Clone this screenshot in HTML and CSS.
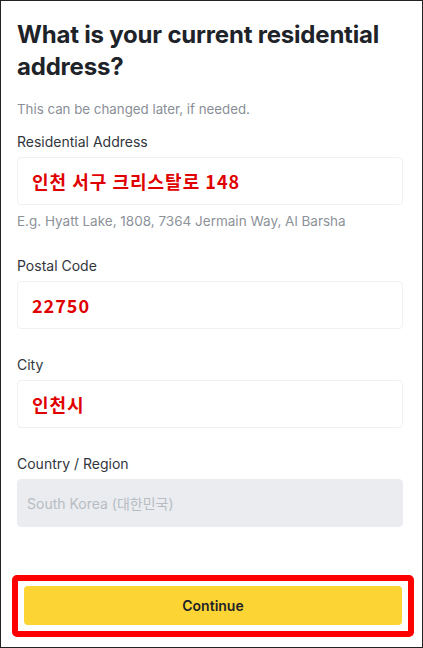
FILE: index.html
```html
<!DOCTYPE html>
<html lang="en">
<head>
    <meta charset="UTF-8">
    <meta name="viewport" content="width=device-width, initial-scale=1.0">
    <title>Residential Address</title>
    <link rel="stylesheet" href="styles.css">
</head>
<body>

    <div class="screen">
        <div class="form">
            <h1 class="title">What is your current residential address?</h1>
            <p class="subtitle">This can be changed later, if needed.</p>

            <div class="field">
                <label class="field-label">Residential Address</label>
                <div class="input">
                    <span class="value">인천 서구 크리스탈로 148</span>
                </div>
                <p class="hint">E.g. Hyatt Lake, 1808, 7364 Jermain Way, Al Barsha</p>
            </div>

            <div class="field">
                <label class="field-label">Postal Code</label>
                <div class="input">
                    <span class="value">22750</span>
                </div>
            </div>

            <div class="field">
                <label class="field-label">City</label>
                <div class="input">
                    <span class="value">인천시</span>
                </div>
            </div>

            <div class="field">
                <label class="field-label">Country / Region</label>
                <div class="input input-disabled">
                    <span class="disabled-value">South Korea (대한민국)</span>
                </div>
            </div>
        </div>

        <div class="footer">
            <div class="highlight">
                <button class="continue-button">Continue</button>
            </div>
        </div>
    </div>

</body>
</html>
```

FILE: styles.css
```css
body {
    font-family: 'Inter', 'Noto Sans CJK KR', sans-serif;
    margin: 0;
    padding: 0;
    background-color: white;
}

.screen {
    box-sizing: border-box;
    height: 648px;
    border: 1px solid #222;
    display: flex;
    flex-direction: column;
}

.form {
    padding: 18px 19px 0 16px;
    flex: 1;
}

.title {
    font-size: 24px;
    font-weight: 700;
    line-height: 32px;
    color: #1e2329;
    margin: 0;
    letter-spacing: -0.2px;
}

.subtitle {
    font-size: 13.3px;
    line-height: 18px;
    color: #8a8f97;
    margin: 17px 0 0 0;
}

.field {
    margin-bottom: 26px;
}

.subtitle + .field {
    margin-top: 14px;
}

.field-label {
    display: block;
    font-size: 14px;
    line-height: 20px;
    color: #32363c;
    margin-bottom: 5px;
}

.input {
    height: 48px;
    box-sizing: border-box;
    border: 1px solid #f0f1f3;
    border-radius: 4px;
    padding: 0 14px;
    display: flex;
    align-items: center;
}

.value {
    font-family: 'Noto Sans CJK KR', sans-serif;
    font-size: 18px;
    font-weight: 700;
    color: #e00000;
    letter-spacing: 1px;
}

.input-disabled {
    background-color: #eaecef;
    border-color: #eaecef;
    padding-left: 9px;
}

.disabled-value {
    font-size: 14px;
    color: #b7bcc4;
}

.hint {
    font-size: 13.5px;
    line-height: 18px;
    color: #8d9299;
    margin: 7px 0 0 0;
}

.footer {
    padding: 0 8px 10px 11px;
}

.highlight {
    border: 6px solid #ff0000;
    border-radius: 5px;
    padding: 5px 6px 6px 6px;
}

.continue-button {
    display: block;
    width: 100%;
    height: 39px;
    background-color: #fcd535;
    color: #1e2329;
    font-family: 'Inter', sans-serif;
    font-size: 14px;
    font-weight: 600;
    border: none;
    border-radius: 4px;
    cursor: pointer;
}
```
